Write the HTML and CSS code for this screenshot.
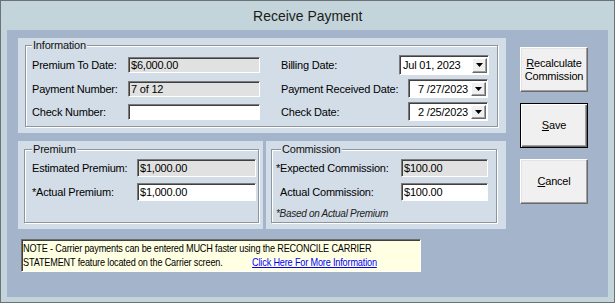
FILE: index.html
```html
<!DOCTYPE html>
<html>
<head>
<meta charset="utf-8">
<title>Receive Payment</title>
<link rel="stylesheet" href="styles.css">
</head>
<body>
<div class="window">
  <div class="titlebar"><span class="title">Receive Payment</span></div>
  <div class="panel">
    <div class="main">
      <div class="groups">
        <div class="fill fill-info">
          <fieldset class="frame info">
            <legend>Information</legend>
            <div class="info-grid">
              <div class="lbl">Premium To Date:</div>
              <div class="field ro h16">$6,000.00</div>
              <div class="lbl lbl2">Billing Date:</div>
              <div class="combo">
                <span class="val">Jul 01, 2023</span>
                <span class="ddbtn"><svg width="7" height="4" viewBox="0 0 7 4"><path d="M0 0H7L3.5 4Z" fill="#000"/></svg></span>
              </div>

              <div class="lbl">Payment Number:</div>
              <div class="field ro h16">7 of 12</div>
              <div class="lbl lbl2">Payment Received Date:</div>
              <div class="datepick">
                <span class="val">7 /27/2023</span>
                <span class="ddbtn"><svg width="7" height="4" viewBox="0 0 7 4"><path d="M0 0H7L3.5 4Z" fill="#000"/></svg></span>
              </div>

              <div class="lbl">Check Number:</div>
              <div class="field wr h16"></div>
              <div class="lbl lbl2">Check Date:</div>
              <div class="datepick">
                <span class="val">2 /25/2023</span>
                <span class="ddbtn"><svg width="7" height="4" viewBox="0 0 7 4"><path d="M0 0H7L3.5 4Z" fill="#000"/></svg></span>
              </div>
            </div>
          </fieldset>
        </div>
        <div class="row2">
          <div class="fill fill-prem">
            <fieldset class="frame prem">
              <legend>Premium</legend>
              <div class="prem-grid">
                <div class="lbl">Estimated Premium:</div>
                <div class="field ro">$1,000.00</div>
                <div class="lbl">*Actual Premium:</div>
                <div class="field wr">$1,000.00</div>
              </div>
            </fieldset>
          </div>
          <div class="fill fill-comm">
            <fieldset class="frame comm">
              <legend>Commission</legend>
              <div class="comm-grid">
                <div class="lbl">*Expected Commission:</div>
                <div class="field ro">$100.00</div>
                <div class="lbl indent">Actual Commission:</div>
                <div class="field wr">$100.00</div>
                <div class="foot">*Based on Actual Premium</div>
              </div>
            </fieldset>
          </div>
        </div>
      </div>
      <div class="buttons">
        <div class="btn"><span><u>R</u>ecalculate<br>Commission</span></div>
        <div class="btn def"><span><u>S</u>ave</span></div>
        <div class="btn"><span><u>C</u>ancel</span></div>
      </div>
    </div>
    <div class="note">
      <div class="note-inner">
        <div>NOTE - Carrier payments can be entered MUCH faster using the RECONCILE CARRIER</div>
        <div class="note-l2"><span class="note-txt">STATEMENT feature located on the Carrier screen.</span><a class="link" href="#">Click Here For More Information</a></div>
      </div>
    </div>
  </div>
</div>
</body>
</html>
```

FILE: styles.css
```css
* { box-sizing: border-box; }
html, body { margin: 0; padding: 0; background: #ffffff; }
body {
  font-family: "Liberation Sans", Arial, sans-serif;
  font-size: 11px;
  letter-spacing: -0.2px;
  color: #000;
}

.window {
  width: 615px;
  height: 303px;
  border: 1px solid #6b7378;
  background: #c3d5da;
  display: flex;
  flex-direction: column;
}
.titlebar {
  height: 29px;
  display: flex;
  align-items: center;
  justify-content: center;
}
.title {
  display: inline-block;
  font-size: 15px;
  letter-spacing: 0;
  transform: scaleX(0.93);
  color: #1b1b1b;
}
.panel {
  margin: 0 6px 4px 6px;
  height: 267px;
  background: #a3b4cb;
  padding: 8px 0 0 11px;
}
.main { display: flex; }
.groups {
  width: 488px;
  display: flex;
  flex-direction: column;
  gap: 8px;
}
.fill { background: #d3dde8; }
.fill-info { padding: 1px 8px 6px 7px; }
.row2 { display: flex; gap: 3px; }
.fill-prem { width: 245px; padding: 2px 4px 6px 6px; }
.fill-comm { width: 240px; padding: 2px 9px 6px 5px; }

fieldset.frame {
  margin: 0;
  min-width: 0;
  border: 1px solid #8d969f;
  box-shadow: inset 1px 1px 0 #ffffff, 1px 1px 0 #ffffff;
}
legend {
  padding: 0 1px;
  line-height: 13px;
  background: #d3dde8;
  color: #111;
}
.info { padding: 1px 8px 3px 6px; }
.prem { padding: 0 2px 18px 7px; }
.comm { padding: 0 8px 0 4px; }
.comm legend { margin-left: 5px; }

.info-grid {
  display: grid;
  grid-template-columns: 96px 132px 139px 90px;
  grid-template-rows: 24px 23px 23px;
  align-items: center;
}
.lbl { white-space: nowrap; }
.lbl2 { padding-left: 21px; }
.prem-grid {
  display: grid;
  grid-template-columns: 105px 119px;
  grid-template-rows: 24px 24px;
  align-items: center;
}
.comm-grid {
  display: grid;
  grid-template-columns: 125px 87px;
  grid-template-rows: 24px 24px 18px;
  align-items: center;
}
.indent { padding-left: 4px; }
.foot {
  grid-column: 1 / 3;
  font-size: 10px;
  line-height: 12px;
  font-style: italic;
  letter-spacing: -0.3px;
  color: #222;
  padding-top: 2px;
}

.field {
  height: 18px;
  border-style: solid;
  border-width: 1px;
  border-color: #7a7a7a #ffffff #ffffff #7a7a7a;
  box-shadow: inset 1px 1px 0 #404040;
  padding: 0 0 0 2px;
  line-height: 16px;
  white-space: nowrap;
  overflow: hidden;
}
.field.h16 { height: 16px; line-height: 14px; }
.ro { background: #e1e1e1; }
.wr { background: #ffffff; }

.combo, .datepick {
  display: flex;
  align-items: center;
  background: #fff;
  border-style: solid;
  border-width: 1px;
  border-color: #7a7a7a #ffffff #ffffff #7a7a7a;
  box-shadow: inset 1px 1px 0 #404040;
  white-space: nowrap;
}
.combo { width: 90px; height: 20px; padding-left: 3px; }
.datepick {
  width: 80px;
  height: 19px;
  justify-self: end;
  margin-right: 1px;
  padding-left: 9px;
}
.val { flex: 1; }
.ddbtn {
  width: 15px;
  height: 15px;
  margin-right: 1px;
  background: #f0f0f0;
  border: 1px solid;
  border-color: #ffffff #696969 #696969 #ffffff;
  box-shadow: inset -1px -1px 0 #a0a0a0;
  display: flex;
  align-items: center;
  justify-content: center;
}
.datepick .ddbtn { height: 14px; }
.ddbtn svg { display: block; }

.buttons {
  margin-left: 14px;
  margin-top: 9px;
  display: flex;
  flex-direction: column;
  gap: 11px;
}
.btn {
  width: 68px;
  height: 45px;
  background: #f0f0f0;
  border: 1px solid;
  border-color: #ffffff #696969 #696969 #ffffff;
  box-shadow: inset -1px -1px 0 #a0a0a0, inset 1px 1px 0 #e3e3e3;
  display: flex;
  align-items: center;
  justify-content: center;
  text-align: center;
  line-height: 13px;
}
.btn.def {
  border-color: #000;
  box-shadow: inset 1px 1px 0 #ffffff, inset -1px -1px 0 #696969, inset -2px -2px 0 #a0a0a0;
}

.note {
  margin: 10px 0 0 3px;
  width: 400px;
  height: 33px;
  background: #ffffe3;
  border: 1px solid;
  border-color: #6d6d6d #ffffff #ffffff #6d6d6d;
  box-shadow: inset 1px 1px 0 #404040;
  padding: 1px 0 0 1px;
  line-height: 14px;
  white-space: nowrap;
  overflow: hidden;
}
.note-inner {
  width: 480px;
  transform: scaleX(0.83);
  transform-origin: left top;
}
.note-l2 { display: flex; }
.note-txt { width: 276px; flex-shrink: 0; }
.link { color: #0000ff; text-decoration: underline; flex-shrink: 0; }
```
